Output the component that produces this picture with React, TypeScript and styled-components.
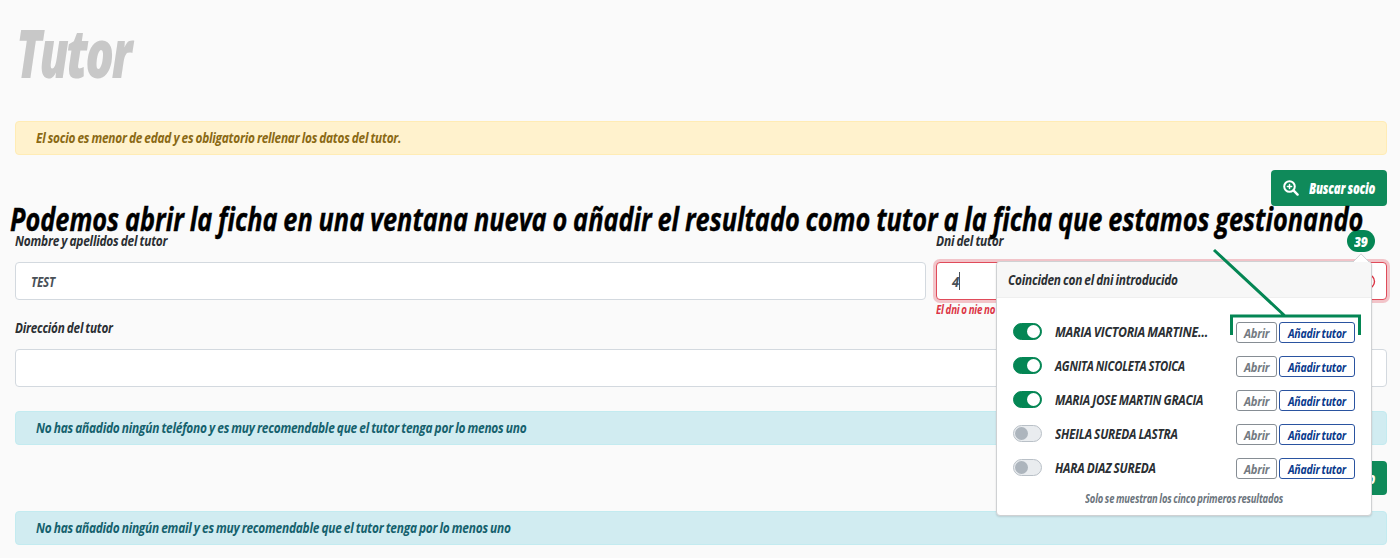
import React, { useLayoutEffect, useRef, useState } from 'react';
import styled, { createGlobalStyle } from 'styled-components';

const GlobalStyle = createGlobalStyle`
  *, *::before, *::after { box-sizing: border-box; }
  body {
    margin: 0;
    background: #fafafa;
    color: #2b2f33;
    font-family: 'Open Sans', 'Noto Sans', sans-serif;
    font-style: italic;
    font-weight: 700;
    overflow: hidden;
  }
`;

const FitBox = styled.span<{ $w: number }>`
  display: block;
  flex: none;
  width: ${(p) => p.$w}px;
  white-space: nowrap;
`;
const FitInner = styled.span`
  display: inline-block;
  transform-origin: 0 50%;
  letter-spacing: -0.02em;
  word-spacing: -0.05em;
`;

/* Condenses its text horizontally to the given width. */
function Condensed({ w, children }: { w: number; children: string }) {
  const ref = useRef<HTMLSpanElement>(null);
  const [scale, setScale] = useState(1);
  useLayoutEffect(() => {
    if (ref.current) setScale(w / ref.current.offsetWidth);
  }, [w, children]);
  return (
    <FitBox $w={w}>
      <FitInner ref={ref} style={{ transform: `scaleX(${scale})` }}>{children}</FitInner>
    </FitBox>
  );
}

const Page = styled.main`
  position: relative;
  height: 558px;
  padding: 0 13px 0 15px;
  overflow: hidden;
`;
const Title = styled.h1`
  margin: 0 0 17px;
  padding-left: 1px;
  height: 104px;
  font-size: 68px;
  line-height: 103px;
  font-weight: 800;
  color: #c8c8c8;
  ${FitInner} { letter-spacing: -0.05em; }
`;
const Alert = styled.div<{ $kind: 'warning' | 'info' }>`
  height: 34px;
  padding-left: 20px;
  border: 1px solid ${(p) => (p.$kind === 'warning' ? '#ffecb5' : '#c3ebf0')};
  border-radius: 4px;
  background: ${(p) => (p.$kind === 'warning' ? '#fff2cd' : '#d1ecf1')};
  color: ${(p) => (p.$kind === 'warning' ? '#8a6914' : '#15616d')};
  font-size: 15px;
  line-height: 30px;
`;
const Actions = styled.div<{ $top: number; $bottom: number }>`
  display: flex;
  justify-content: flex-end;
  margin: ${(p) => p.$top}px 0 ${(p) => p.$bottom}px;
`;
const PrimaryButton = styled.button<{ $h: number }>`
  display: flex;
  align-items: center;
  gap: 10px;
  width: 116px;
  height: ${(p) => p.$h}px;
  padding: 0 12px;
  border: 0;
  border-radius: 4px;
  background: #0f8a5a;
  color: #fff;
  font: inherit;
  font-size: 15px;
  font-weight: 800;
`;
const FieldRow = styled.div`
  display: grid;
  grid-template-columns: 911px 451px;
  gap: 10px;
`;
const Field = styled.div`
  display: flex;
  flex-direction: column;
`;
const Label = styled.label`
  height: 30px;
  font-size: 14.5px;
  line-height: 18px;
`;
const Input = styled.div<{ $invalid?: boolean }>`
  display: flex;
  align-items: center;
  justify-content: space-between;
  height: 38px;
  padding: 0 10px 0 15px;
  border: 1px solid ${(p) => (p.$invalid ? '#e04b5a' : '#d3d9df')};
  border-radius: 4px;
  background: #fff;
  box-shadow: ${(p) => (p.$invalid ? '0 0 0 3px rgba(220,53,69,.27)' : 'none')};
  color: #495057;
  font-size: 15px;
`;
const Typed = styled.span`
  display: flex;
  align-items: center;
`;
const Caret = styled.span`
  width: 1px;
  height: 18px;
  background: #495057;
`;
const ErrorText = styled.div`
  height: 20px;
  color: #dc3545;
  font-size: 12px;
  line-height: 19px;
`;
const AddressField = styled(Field)`
  margin: -1px 0 24px;
`;

const Popover = styled.section`
  position: absolute;
  left: 996px;
  top: 261px;
  width: 376px;
  height: 255px;
  border: 1px solid #cfd1d3;
  border-radius: 4px;
  background: #fff;
  box-shadow: 0 1px 2px rgba(0,0,0,.12);
`;
const Arrow = styled.svg`
  position: absolute;
  right: 2px;
  top: -9px;
`;
const PopHeader = styled.header`
  height: 36px;
  padding-left: 11px;
  border-bottom: 1px solid #efefef;
  border-radius: 4px 4px 0 0;
  background: #f7f7f7;
  font-size: 14.5px;
  line-height: 36px;
`;
const Results = styled.ul`
  margin: 0;
  padding: 16px 16px 0;
  list-style: none;
`;
const Result = styled.li`
  display: flex;
  align-items: center;
  height: 34px;
  font-size: 15px;
`;
const Switch = styled.span<{ $on: boolean }>`
  display: flex;
  align-items: center;
  justify-content: ${(p) => (p.$on ? 'flex-end' : 'flex-start')};
  width: 29px;
  height: 17px;
  margin-right: 13px;
  padding: 0 1px;
  border: 1px solid ${(p) => (p.$on ? '#048654' : '#b9c0c7')};
  border-radius: 9px;
  background: ${(p) => (p.$on ? '#048654' : '#e9ecef')};
  &::after {
    content: '';
    width: 13px;
    height: 13px;
    border-radius: 50%;
    background: ${(p) => (p.$on ? '#fff' : '#adb5bd')};
  }
`;
const Name = styled.span`
  flex: 1;
`;
const Buttons = styled.span`
  display: flex;
  gap: 2px;
  margin-top: 2px;
`;
const SmallButton = styled.button<{ $main?: boolean }>`
  display: flex;
  align-items: center;
  justify-content: center;
  width: ${(p) => (p.$main ? 76 : 41)}px;
  height: 21px;
  padding: 2px 0 0;
  border: 1px solid ${(p) => (p.$main ? '#2a53a0' : '#868d94')};
  border-radius: 3px;
  background: #fff;
  color: ${(p) => (p.$main ? '#0a3a8c' : '#747b82')};
  font: inherit;
  font-size: 13px;
  line-height: 19px;
`;
const Note = styled.footer`
  display: flex;
  justify-content: center;
  color: #6c757d;
  font-size: 12px;
  line-height: 30px;
`;
const Badge = styled.span`
  position: absolute;
  left: 1347px;
  top: 230px;
  display: flex;
  align-items: center;
  justify-content: center;
  width: 28px;
  height: 22px;
  border-radius: 11px;
  background: #048654;
  color: #fff;
  font-size: 14px;
  font-weight: 800;
`;
const Caption = styled.p`
  position: absolute;
  left: 10px;
  top: 198px;
  margin: 0;
  color: #000;
  font-size: 32.5px;
  line-height: 42px;
  ${FitInner} {
    letter-spacing: 0;
    word-spacing: -0.03em;
    -webkit-text-stroke: 0.4px #000;
  }
`;
const Pointer = styled.svg`
  position: absolute;
  left: 1206px;
  top: 244px;
`;

const people = [
  { name: 'MARIA VICTORIA MARTINE…', w: 153, on: true },
  { name: 'AGNITA NICOLETA STOICA', w: 130, on: true },
  { name: 'MARIA JOSE MARTIN GRACIA', w: 148, on: true },
  { name: 'SHEILA SUREDA LASTRA', w: 123, on: false },
  { name: 'HARA DIAZ SUREDA', w: 101, on: false },
];

const ZoomIcon = () => (
  <svg width="16" height="16" viewBox="0 0 16 16" fill="none" stroke="#fff" strokeLinecap="round">
    <circle cx="6.5" cy="6.500" r="5.3" strokeWidth="2" />
    <path d="M10.7 10.7 14.6 14.6" strokeWidth="2.4" />
    <path d="M6.5 4.4v4.2M4.4 6.5h4.2" strokeWidth="1.5" />
  </svg>
);

export default function App() {
  return (
    <>
      <GlobalStyle />
      <Page>
        <Title><Condensed w={114}>Tutor</Condensed></Title>
        <Alert $kind="warning">
          <Condensed w={365}>El socio es menor de edad y es obligatorio rellenar los datos del tutor.</Condensed>
        </Alert>
        <Actions $top={15} $bottom={26}>
          <PrimaryButton $h={36}><ZoomIcon /><Condensed w={66}>Buscar socio</Condensed></PrimaryButton>
        </Actions>
        <FieldRow>
          <Field>
            <Label><Condensed w={152}>Nombre y apellidos del tutor</Condensed></Label>
            <Input><Condensed w={24}>TEST</Condensed></Input>
          </Field>
          <Field>
            <Label><Condensed w={67}>Dni del tutor</Condensed></Label>
            <Input $invalid>
              <Typed><Condensed w={7}>4</Condensed><Caret /></Typed>
              <svg width="17" height="17" viewBox="0 0 17 17" fill="none" stroke="#dc3545" strokeWidth="1.4">
                <circle cx="8.5" cy="8.5" r="7" />
                <path d="M8.5 5v4.5M8.5 11v1.5" />
              </svg>
            </Input>
            <ErrorText><Condensed w={59}>El dni o nie no</Condensed></ErrorText>
          </Field>
        </FieldRow>
        <AddressField>
          <Label><Condensed w={98}>Dirección del tutor</Condensed></Label>
          <Input />
        </AddressField>
        <Alert $kind="info">
          <Condensed w={490}>No has añadido ningún teléfono y es muy recomendable que el tutor tenga por lo menos uno</Condensed>
        </Alert>
        <Actions $top={16} $bottom={16}>
          <PrimaryButton $h={34}><ZoomIcon /><Condensed w={66}>Buscar socio</Condensed></PrimaryButton>
        </Actions>
        <Alert $kind="info">
          <Condensed w={475}>No has añadido ningún email y es muy recomendable que el tutor tenga por lo menos uno</Condensed>
        </Alert>

        <Popover>
          <Arrow width="16" height="10" viewBox="0 0 16 10">
            <path d="M0 9 8 .8 16 9" fill="#fff" stroke="#cfd1d3" />
            <path d="M1 9h14v1H1z" fill="#f7f7f7" />
          </Arrow>
          <PopHeader><Condensed w={170}>Coinciden con el dni introducido</Condensed></PopHeader>
          <Results>
            {people.map((p) => (
              <Result key={p.name}>
                <Switch $on={p.on} />
                <Name><Condensed w={p.w}>{p.name}</Condensed></Name>
                <Buttons>
                  <SmallButton><Condensed w={25}>Abrir</Condensed></SmallButton>
                  <SmallButton $main><Condensed w={58}>Añadir tutor</Condensed></SmallButton>
                </Buttons>
              </Result>
            ))}
          </Results>
          <Note><Condensed w={198}>Solo se muestran los cinco primeros resultados</Condensed></Note>
        </Popover>

        <Badge><Condensed w={14}>39</Condensed></Badge>
        <Caption><Condensed w={1353}>Podemos abrir la ficha en una ventana nueva o añadir el resultado como tutor a la ficha que estamos gestionando</Condensed></Caption>
        <Pointer width="160" height="96" viewBox="0 0 160 96" fill="none" stroke="#048654" strokeWidth="3">
          <path d="M8 6 79 72M25.500 91V72H153.500V91" />
        </Pointer>
      </Page>
    </>
  );
}
